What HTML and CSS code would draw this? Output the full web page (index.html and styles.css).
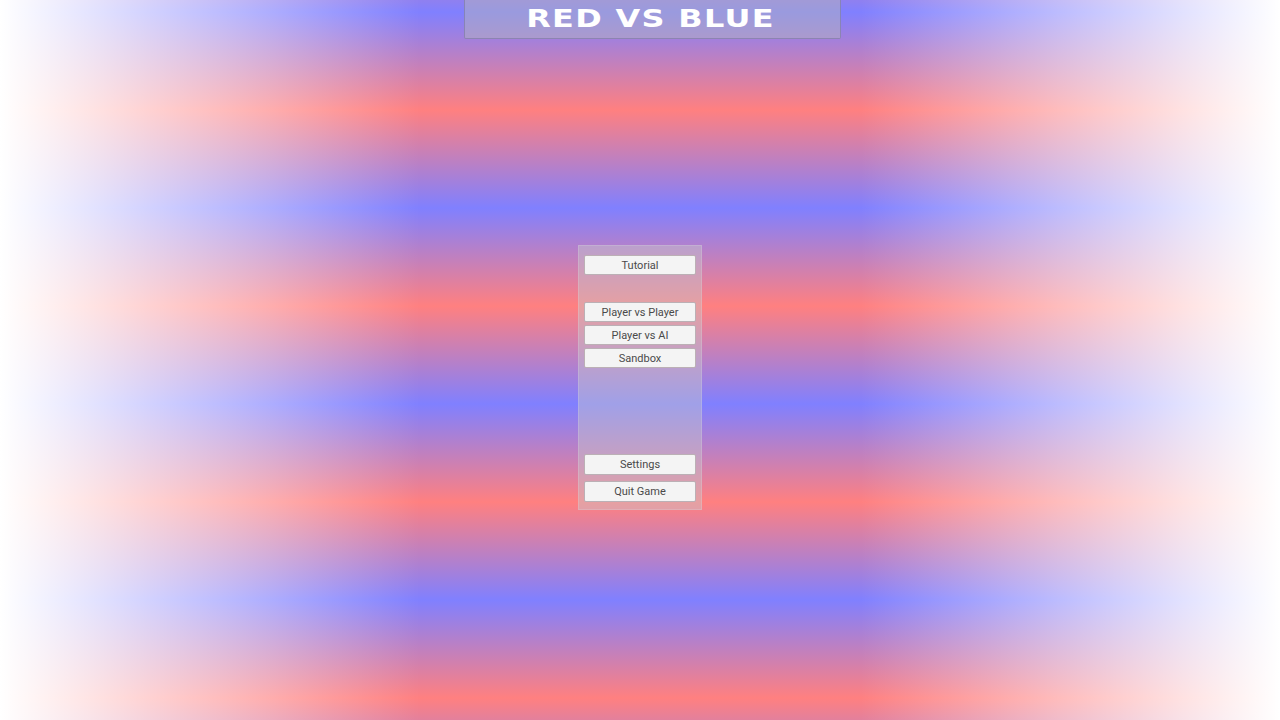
FILE: index.html
```html
<!DOCTYPE html>
<html lang="en">
  <head>
    <meta charset="UTF-8" />
    <meta name="viewport" content="width=device-width, initial-scale=1.0" />
    <title>Red vs Blue</title>
    <link rel="stylesheet" href="styles.css">
  </head>
  <body>
    <div class="screen">
      <div class="title-bar">
        <h1>RED VS BLUE</h1>
      </div>
      <div class="menu">
        <button class="menu-btn">Tutorial</button>
        <div class="mode-group">
          <button class="menu-btn">Player vs Player</button>
          <button class="menu-btn">Player vs AI</button>
          <button class="menu-btn">Sandbox</button>
        </div>
        <div class="bottom-group">
          <button class="menu-btn">Settings</button>
          <button class="menu-btn">Quit Game</button>
        </div>
      </div>
    </div>
  </body>
</html>
```

FILE: styles.css
```css
html,
body {
  margin: 0;
  padding: 0;
  height: 100%;
}
body {
  font-family: Roboto, "Noto Sans", sans-serif;
  overflow: hidden;
  background:
    linear-gradient(
      to right,
      #fff 0,
      rgba(255, 255, 255, 0) 420px,
      rgba(255, 255, 255, 0) 860px,
      #fff 1280px
    ),
    repeating-linear-gradient(
      to bottom,
      #8080ff -184px,
      #ff8080 -86px,
      #8080ff 12px
    );
}
.screen {
  height: 100vh;
  display: flex;
  flex-direction: column;
  align-items: center;
}
.title-bar {
  width: 375px;
  height: 38px;
  margin-left: 25px;
  background-color: rgba(180, 180, 190, 0.5);
  border: 1px solid rgba(110, 110, 150, 0.5);
  border-top: none;
  border-radius: 0 0 2px 2px;
  display: flex;
  justify-content: center;
  align-items: center;
}
/* wide logo lettering: stretch the bold face sideways */
.title-bar h1 {
  margin: 0 4px 0 0;
  color: #fff;
  font-family: "DejaVu Sans", sans-serif;
  font-weight: bold;
  font-size: 24px;
  letter-spacing: 1px;
  line-height: 1;
  transform: scaleX(1.33);
}
.menu {
  margin-top: 206px;
  width: 112px;
  height: 247px;
  padding: 9px 5px 7px;
  background-color: rgba(200, 200, 205, 0.45);
  border: 1px solid rgba(230, 230, 235, 0.2);
  display: flex;
  flex-direction: column;
}
.mode-group {
  margin-top: 27px;
  display: flex;
  flex-direction: column;
  gap: 3px;
}
.bottom-group {
  margin-top: auto;
  display: flex;
  flex-direction: column;
  gap: 6px;
}
.menu-btn {
  height: 20px;
  width: 100%;
  padding: 0;
  background-color: #f4f4f4;
  border: 1px solid rgba(140, 120, 130, 0.55);
  border-radius: 2px;
  color: #4a4a4a;
  font-family: Roboto, "Noto Sans", sans-serif;
  font-size: 11px;
  cursor: pointer;
}
.bottom-group .menu-btn {
  height: 21px;
}
.menu-btn:hover {
  background-color: #fff;
}
```
